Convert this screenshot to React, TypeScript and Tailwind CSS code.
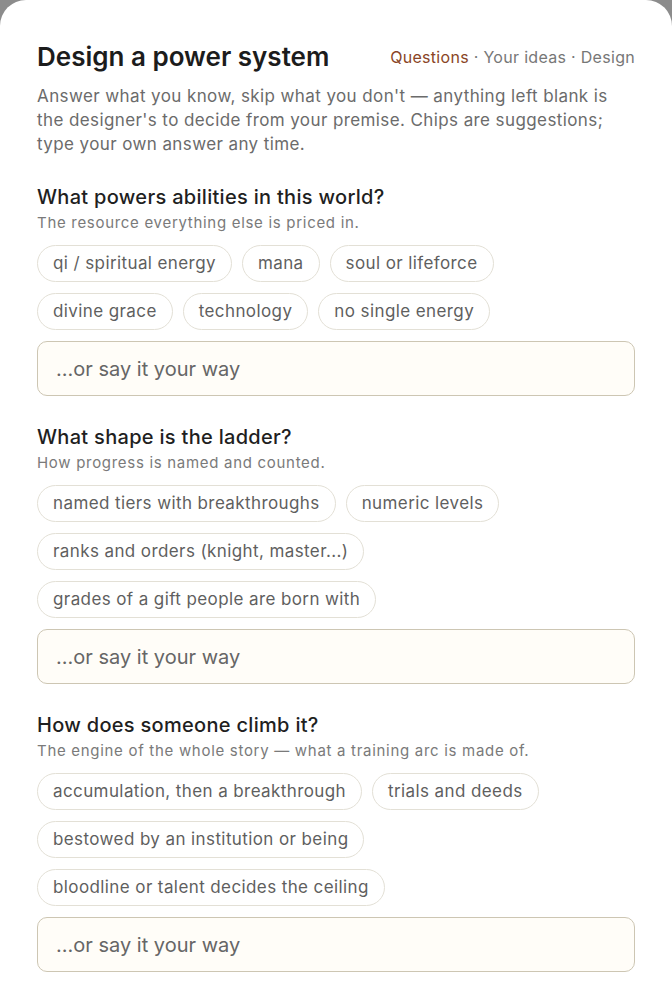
import React from "react";

const QUESTIONS = [
  {
    title: "What powers abilities in this world?",
    hint: "The resource everything else is priced in.",
    chips: [
      "qi / spiritual energy",
      "mana",
      "soul or lifeforce",
      "divine grace",
      "technology",
      "no single energy",
    ],
  },
  {
    title: "What shape is the ladder?",
    hint: "How progress is named and counted.",
    chips: [
      "named tiers with breakthroughs",
      "numeric levels",
      "ranks and orders (knight, master...)",
      "grades of a gift people are born with",
    ],
  },
  {
    title: "How does someone climb it?",
    hint: "The engine of the whole story \u2014 what a training arc is made of.",
    chips: [
      "accumulation, then a breakthrough",
      "trials and deeds",
      "bestowed by an institution or being",
      "bloodline or talent decides the ceiling",
    ],
  },
];

function Question({ q }: { q: (typeof QUESTIONS)[number] }) {
  return (
    <section className="mt-[28px]">
      <h2 className="text-[20px] leading-[26px] font-medium text-[#1f1f1f] tracking-[0.3px]">
        {q.title}
      </h2>
      <p className="mt-[3px] text-[15px] leading-[20px] text-[#7a7a7a] tracking-[0.7px]">{q.hint}</p>
      <div className="mt-[12px] flex flex-wrap gap-x-[10px] gap-y-[11px]">
        {q.chips.map((c) => (
          <button
            key={c}
            className="h-[37px] px-[15px] rounded-full border border-[#e3e0d6] bg-white text-[17px] text-[#5f5f5f] leading-none tracking-[0.4px]"
          >
            {c}
          </button>
        ))}
      </div>
      <input
        placeholder="...or say it your way"
        className="mt-[11px] w-full h-[55px] rounded-[10px] border border-[#cdc6b3] bg-[#fffdf8] px-[18px] text-[20px] text-[#333] placeholder:text-[#666] outline-none"
      />
    </section>
  );
}

export default function App() {
  return (
    <div className="min-h-screen bg-[#8c8c8c]" style={{ fontFamily: "Inter, 'Noto Sans', sans-serif" }}>
      <div className="min-h-[993px] bg-white rounded-t-[26px] px-[37px] pt-[40px] pb-[20px]">
        <div className="flex items-center justify-between">
          <h1 className="text-[26px] leading-[34px] font-semibold text-[#1c1c1c]">
            Design a power system
          </h1>
          <nav className="text-[16px] text-[#777] tracking-[0.3px]">
            <span className="text-[#8a4526]">Questions</span>
            <span> · Your ideas · Design</span>
          </nav>
        </div>
        <p className="mt-[10px] text-[17px] leading-[24px] text-[#6b6b6b] tracking-[0.4px]">
          Answer what you know, skip what you don't — anything left blank is the designer's to
          decide from your premise. Chips are suggestions; type your own answer any time.
        </p>
        {QUESTIONS.map((q) => (
          <Question key={q.title} q={q} />
        ))}
      </div>
    </div>
  );
}
